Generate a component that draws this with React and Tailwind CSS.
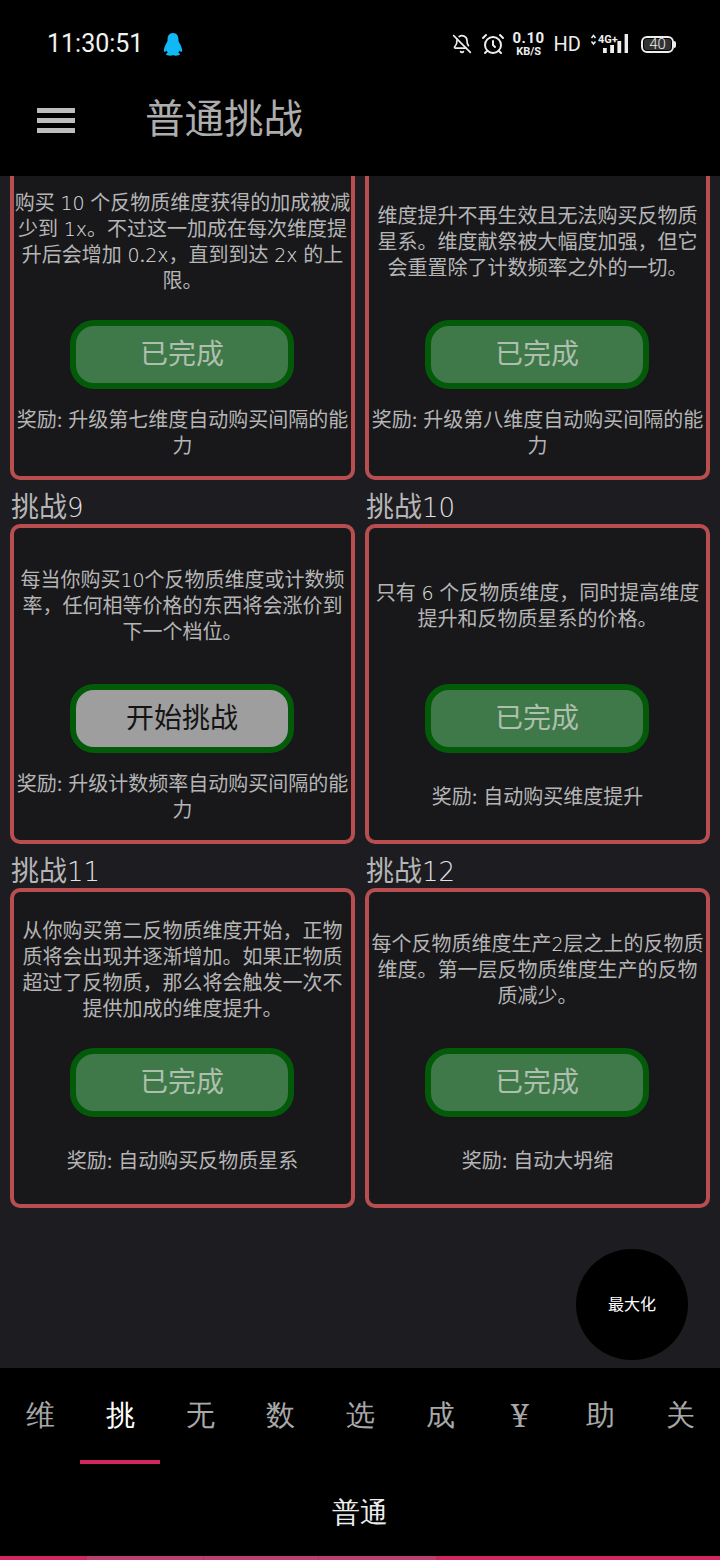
import React from 'react';
import { AlarmClock, BellOff } from 'lucide-react';

const FONT = "font-['Inter','Noto_Sans_CJK_SC',sans-serif]";

const challenges = [
  {
    desc: ['购买 10 个反物质维度获得的加成被减', '少到 1x。不过这一加成在每次维度提', '升后会增加 0.2x，直到到达 2x 的上', '限。'],
    reward: ['奖励: 升级第七维度自动购买间隔的能', '力'],
    done: true,
    first: true,
  },
  {
    desc: ['维度提升不再生效且无法购买反物质', '星系。维度献祭被大幅度加强，但它', '会重置除了计数频率之外的一切。'],
    reward: ['奖励: 升级第八维度自动购买间隔的能', '力'],
    done: true,
    first: true,
  },
  {
    name: '挑战',
    num: '9',
    desc: ['每当你购买10个反物质维度或计数频', '率，任何相等价格的东西将会涨价到', '下一个档位。'],
    reward: ['奖励: 升级计数频率自动购买间隔的能', '力'],
    done: false,
  },
  {
    name: '挑战',
    num: '10',
    desc: ['只有 6 个反物质维度，同时提高维度', '提升和反物质星系的价格。'],
    reward: ['奖励: 自动购买维度提升'],
    done: true,
  },
  {
    name: '挑战',
    num: '11',
    desc: ['从你购买第二反物质维度开始，正物', '质将会出现并逐渐增加。如果正物质', '超过了反物质，那么将会触发一次不', '提供加成的维度提升。'],
    reward: ['奖励: 自动购买反物质星系'],
    done: true,
  },
  {
    name: '挑战',
    num: '12',
    desc: ['每个反物质维度生产2层之上的反物质', '维度。第一层反物质维度生产的反物', '质减少。'],
    reward: ['奖励: 自动大坍缩'],
    done: true,
  },
];

const tabs = ['维', '挑', '无', '数', '选', '成', '¥', '助', '关'];

// digits are wider with a footed 1 in the reference
const Digits = ({ text }) =>
  text.split(/([0-9x]+)/).map((part, i) =>
    i % 2 === 1 ? (
      <span key={i} className="font-['DejaVu_Sans',sans-serif] font-extralight leading-none text-[19px] text-[#e2e2e2]">
        {part}
      </span>
    ) : (
      part
    )
  );

// QQ penguin
const Penguin = () => (
  <svg width="20" height="24" viewBox="0 0 22 26" className="ml-[20px]">
    <path
      d="M11 1C6.6 1 5 4.6 5 8.4c0 1.2-.2 2-.9 3.2C2.8 13.800 1.300 16.600 1 19.500c-.1 1.300.3 2.200.9 2.200.6 0 1.300-.7 1.800-1.500.3 1 1 1.900 1.700 2.500-1.200.4-2 1-2 1.600C3.400 25.400 5.500 25.800 8 25.800c1.200 0 2.300-.2 3-.6.700.4 1.800.6 3 .6 2.500 0 4.600-.4 4.600-1.500 0-.6-.8-1.200-2-1.600.7-.6 1.400-1.500 1.700-2.500.5.800 1.200 1.500 1.800 1.500.6 0 1-.9.900-2.200-.3-2.900-1.800-5.700-3.100-7.900-.7-1.200-.9-2-.9-3.200C17 4.600 15.400 1 11 1z"
      fill="#10b8f6"
    />
  </svg>
);

const StatusBar = () => (
  <div className="h-[80px] pt-[8px] flex items-center justify-between pl-[47px] pr-[46px] bg-black text-white">
    <div className="flex items-center">
      <span className="text-[25px] text-[#f2f2f2] font-['Roboto',sans-serif]">11:30:51</span>
      <Penguin />
    </div>
    <div className="flex items-center text-[#eeeeee] font-['Roboto',sans-serif]">
      <BellOff size={20} strokeWidth={2} />
      <AlarmClock size={24} strokeWidth={2} className="ml-[9px]" />
      <div className="ml-[8px] w-[32px] flex flex-col items-center leading-none font-bold">
        <span className="text-[15px] h-[14px] tracking-[0.5px]">0.10</span>
        <span className="text-[11px] mt-[1px]">KB/S</span>
      </div>
      <span className="ml-[9px] text-[20px] leading-none">HD</span>
      <svg width="40" height="24" viewBox="0 0 40 24" className="ml-[9px]">
        <path d="M1.500 6 3.500 3.500 5.500 6M1.500 9.500 3.500 12 5.500 9.500" fill="none" stroke="#eee" strokeWidth="1.500" />
        <text x="8" y="11" fontSize="11" fontWeight="700" fill="#eee" fontFamily="Roboto">4G+</text>
        <rect x="13" y="16" width="3.800" height="5" fill="#eee" />
        <rect x="20.200" y="13" width="3.800" height="8" fill="#eee" />
        <rect x="27.400" y="9" width="3.800" height="12" fill="#eee" />
        <rect x="34.600" y="2" width="3.400" height="19" fill="#eee" />
      </svg>
      <div className="ml-[11px] relative w-[33px] h-[17px] rounded-[6px] border-2 border-[#eeeeee] p-[1px]">
        <div className="w-full h-full rounded-[3px] bg-[#333333] flex items-center justify-center text-[15px] font-light leading-none">40</div>
        <div className="absolute -right-[4px] top-[3px] w-[2px] h-[7px] rounded-r-[2px] bg-[#eeeeee]" />
      </div>
    </div>
  </div>
);

const AppBar = () => (
  <div className="h-[96px] pb-[16px] flex items-center bg-black">
    <div className="ml-[37px] w-[38px] flex flex-col gap-[5px]">
      <div className="h-[5px] bg-[#bdbdbd]" />
      <div className="h-[5px] bg-[#bdbdbd]" />
      <div className="h-[5px] bg-[#bdbdbd]" />
    </div>
    <h1 className="ml-[70px] text-[39.500px] font-normal text-[#adadad]">普通挑战</h1>
  </div>
);

const ChallengeCard = ({ name, num, desc, reward, done, first }) => (
  <div className={first ? '-mt-[16px]' : ''}>
    {name && (
      <div className="h-[44px] pt-[9px] pl-[1px] text-[28px] leading-[36px] text-[#b5b5b5]">
        {name}
        <span className="font-['DejaVu_Sans',sans-serif] font-extralight leading-none text-[26px] text-[#e2e2e2]">{num}</span>
      </div>
    )}
    <div className="h-[320px] flex flex-col rounded-[10px] border-4 border-[#b84e50] bg-[#18181b]">
      <div className="h-[154px] pt-[2px] flex flex-col justify-center text-center text-[20px] leading-[26px] text-[#b5b5b5] whitespace-nowrap">
        {desc.map((line, i) => (
          <div key={i}>
            <Digits text={line} />
          </div>
        ))}
      </div>
      <div className="mt-[2px] flex justify-center pr-[1px]">
        <button
          className={`w-[224px] h-[69px] pb-[1px] rounded-[24px] border-[6px] border-[#035b0a] text-[28px] leading-none ${
            done ? 'bg-[#3f7849] text-[#aebfae]' : 'bg-[#9e9e9e] text-[#141414]'
          }`}
        >
          {done ? '已完成' : '开始挑战'}
        </button>
      </div>
      <div className="flex-1 flex flex-col justify-center text-center text-[20px] leading-[26px] text-[#b5b5b5] whitespace-nowrap">
        {reward.map((line, i) => (
          <div key={i}>{line}</div>
        ))}
      </div>
    </div>
  </div>
);

export default function App() {
  return (
    <div className={`relative w-[720px] h-[1560px] flex flex-col overflow-hidden bg-black ${FONT}`}>
      <StatusBar />
      <AppBar />

      <main className="h-[1192px] overflow-hidden bg-[#1c1c21] px-[10px]">
        <div className="grid grid-cols-2 gap-x-[10px]">
          {challenges.map((c, i) => (
            <ChallengeCard key={i} {...c} />
          ))}
        </div>
      </main>

      {/* bouton flottant */}
      <button className="absolute left-[576px] top-[1249px] w-[112px] h-[111px] pb-[2px] rounded-full bg-black text-white text-[16px]">
        最大化
      </button>

      <nav className="flex-1 flex flex-col bg-black font-serif">
        <div className="h-[96px] grid grid-cols-9">
          {tabs.map((t, i) => (
            <div key={t} className="relative flex justify-center pt-[29px]">
              <span className={`${t === '¥' ? 'text-[33px]' : 'text-[29px]'} leading-[38px] ${i === 1 ? 'text-white' : 'text-[#a8a8a8]'}`}>
                {t}
              </span>
              {i === 1 && <div className="absolute left-0 right-0 top-[92px] h-[4px] bg-[#cf2760]" />}
            </div>
          ))}
        </div>
        <div className="flex-1 flex items-center justify-center pt-[5px] text-[28px] text-[#ececec]">普通</div>
        <div className="h-[4px] flex bg-[#cf2760]">
          <div className="ml-[87px] w-[116px] bg-[#bb3f70]" />
          <div className="ml-[1px] w-[114px] bg-[#bb3f70]" />
          <div className="ml-[1px] w-[117px] bg-[#bb3f70]" />
        </div>
      </nav>
    </div>
  );
}
